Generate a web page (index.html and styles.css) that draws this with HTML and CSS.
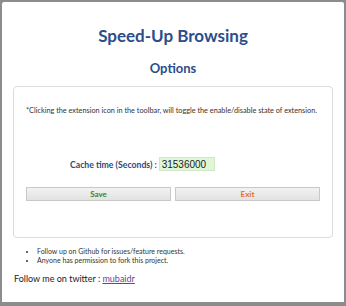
FILE: index.html
```html
<!DOCTYPE html>
<html lang="en">
  <head>
    <meta charset="UTF-8" />
    <meta name="viewport" content="width=device-width, initial-scale=1.0" />
    <title>Speed-Up Browsing - Options</title>
    <link rel="stylesheet" href="styles.css">
  </head>
  <body>
    <div class="frame">
      <h1 class="title">Speed-Up Browsing</h1>
      <h2 class="subtitle">Options</h2>

      <div class="options-box">
        <p class="note">*Clicking the extension icon in the toolbar, will toggle the enable/disable state of extension.</p>

        <div class="cache-row">
          <label for="cache-time">Cache time (Seconds) :</label>
          <input type="text" id="cache-time" value="31536000" />
        </div>

        <div class="buttons">
          <button class="save">Save</button>
          <button class="exit">Exit</button>
        </div>
      </div>

      <ul class="info">
        <li>Follow up on Github for issues/feature requests.</li>
        <li>Anyone has permission to fork this project.</li>
      </ul>

      <p class="twitter">Follow me on twitter : <a href="#">mubaidr</a></p>
    </div>
  </body>
</html>
```

FILE: styles.css
```css
body {
  margin: 0;
  padding: 0;
  font-family: Lato, "Open Sans", sans-serif;
  background-color: #8c8c8c;
}

.frame {
  box-sizing: border-box;
  width: 346px;
  height: 306px;
  margin: 0;
  padding: 0 11px;
  background-color: white;
  border: 2px solid #8c8c8c;
  border-bottom-width: 4px;
  border-radius: 4px;
  overflow: hidden;
}

.title {
  margin: 23px 0 0;
  text-align: center;
  font-size: 17px;
  font-weight: bold;
  line-height: 22px;
  color: #2b4d8c;
}

.subtitle {
  margin: 12px 0 0;
  text-align: center;
  font-size: 13px;
  font-weight: bold;
  line-height: 18px;
  color: #2b4d8c;
}

.options-box {
  margin-top: 9px;
  height: 152px;
  box-sizing: border-box;
  padding: 19px 12px 0;
  border: 1px solid #dcdcdc;
  border-radius: 4px;
}

.note {
  margin: 0;
  font-size: 7.3px;
  line-height: 10px;
  color: #333;
}

.cache-row {
  margin-top: 41px;
  padding-left: 44px;
  display: flex;
  align-items: center;
  gap: 2px;
}

.cache-row label {
  font-size: 8.7px;
  font-weight: bold;
  color: #2b4a78;
}

.cache-row input {
  width: 56px;
  height: 14px;
  box-sizing: border-box;
  padding: 0 2px;
  border: 1px solid #cfe6c8;
  background-color: #dff7d7;
  font-family: "Liberation Sans", Arial, sans-serif;
  font-size: 10px;
  color: #222;
}

.buttons {
  margin-top: 16px;
  display: flex;
  gap: 4px;
}

.buttons button {
  flex: 1;
  height: 14px;
  padding: 0;
  border: 1px solid #c8c8c8;
  background: linear-gradient(#f2f2f2, #e2e2e2);
  font-family: Lato, sans-serif;
  font-size: 8px;
  font-weight: bold;
}

.buttons .save {
  color: #3d7f2c;
}

.buttons .exit {
  color: #e0702a;
}

.info {
  margin: 9px 0 0;
  padding-left: 24px;
  font-size: 7px;
  line-height: 9px;
  color: #333;
}

.twitter {
  margin: 8px 0 0 1px;
  font-size: 9px;
  line-height: 12px;
  color: #222;
}

.twitter a {
  color: #6b3fa0;
}
```
